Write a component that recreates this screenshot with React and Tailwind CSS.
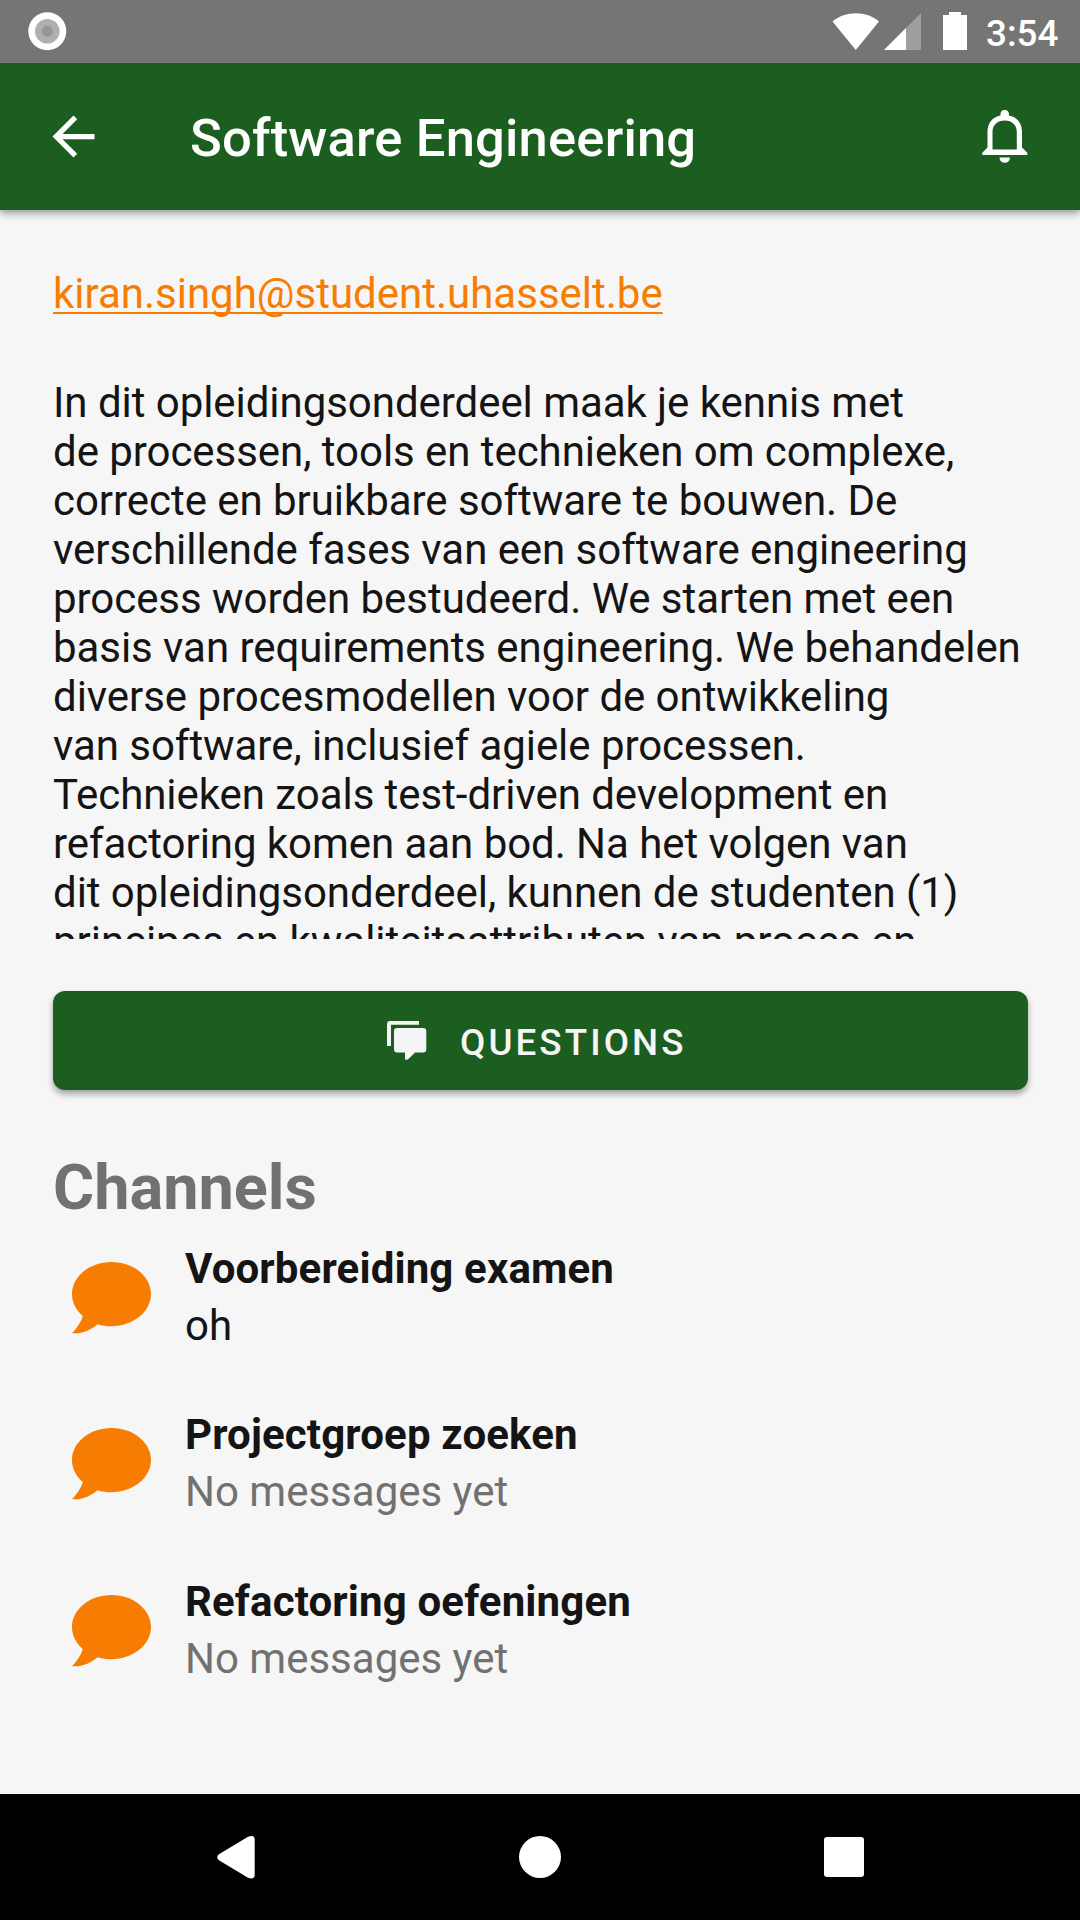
const ROBOTO = "font-['Roboto',sans-serif]";

const CHANNELS = [
  { name: "Voorbereiding examen", message: "oh", color: "text-[#141414]", height: "h-[166px]" },
  { name: "Projectgroep zoeken", message: "No messages yet", color: "text-[#717171]", height: "h-[167px]" },
  { name: "Refactoring oefeningen", message: "No messages yet", color: "text-[#717171]", height: "h-[166px]" },
];

const LINES = [
  "In dit opleidingsonderdeel maak je kennis met",
  "de processen, tools en technieken om complexe,",
  "correcte en bruikbare software te bouwen. De",
  "verschillende fases van een software engineering",
  "process worden bestudeerd. We starten met een",
  "basis van requirements engineering. We behandelen",
  "diverse procesmodellen voor de ontwikkeling",
  "van software, inclusief agiele processen.",
  "Technieken zoals test-driven development en",
  "refactoring komen aan bod. Na het volgen van",
  "dit opleidingsonderdeel, kunnen de studenten (1)",
  "principes en kwaliteitsattributen van proces en",
];

function StatusBar() {
  return (
    <div className="relative z-10 flex h-[63px] items-start bg-[#757575] text-white">
      <svg className="mt-3 ml-7 h-[39px] w-[39px]" viewBox="0 0 39 39">
        <circle cx="19.3" cy="19.3" r="19" fill="#fff" />
        <circle cx="19.3" cy="19.3" r="12.3" fill="#b0b0b0" />
        <circle cx="19.3" cy="19.3" r="5.7" fill="#979797" />
      </svg>
      <svg className="mt-3 ml-auto h-[39px] w-[136px]" viewBox="0 0 136 39">
        <path d="M0.5 9.5C13 -1.5 34.500 -1.500 47 9.500L23.800 38Z" fill="#fff" />
        <path d="M52 38L89 1V38Z" fill="#fff" fillOpacity="0.3" />
        <path d="M52 38L74 16V38Z" fill="#fff" />
        <path d="M111 38V3H117V0H129V3H135V38Z" fill="#fff" />
      </svg>
      <span className="mt-[11px] mr-[21px] ml-[18px] w-[73px] text-[36.75px] leading-[46px] font-medium whitespace-nowrap">3:54</span>
    </div>
  );
}

function AppBar() {
  return (
    <header className="relative flex h-[147px] items-center bg-[#1c5e20] text-white shadow-[0_3px_8px_rgba(0,0,0,0.4)]">
      <svg className="ml-[42px] h-[63px] w-[63px]" viewBox="0 0 24 24" fill="currentColor">
        <path d="M20 11H7.830l5.590-5.590L12 4l-8 8 8 8 1.410-1.410L7.830 13H20v-2z" />
      </svg>
      <h1 className="mt-[3px] ml-[85px] text-[52.5px] leading-[62px] font-medium tracking-[0.19px] whitespace-nowrap">Software Engineering</h1>
      <svg className="mr-[52px] ml-auto h-[54px] w-[46px]" viewBox="0 0 46 54">
        <path d="M5.500 37.500V22C5.500 13 10.500 7.200 18.500 5.500V4A4.200 4.200 0 0 1 26.900 4V5.500C35 7.200 40 13 40 22V37.500L45.300 42.700V45H0.300V42.700Z M10.500 39.500H34.800V22C34.800 15 30 10.500 22.700 10.500S10.500 15 10.500 22Z" fill="#fff" fillRule="evenodd" />
        <path d="M17.500 47.500H28A5.250 5.250 0 0 1 17.500 47.500Z" fill="#fff" />
      </svg>
    </header>
  );
}

function Channel({ name, message, color, height }) {
  return (
    <li className={"flex " + height}>
      <svg className="mt-[18px] ml-[19px] h-[72px] w-[79px]" viewBox="0 0 512 467" preserveAspectRatio="none" fill="#f77d02">
        <path d="M256 0C114.600 0 0 93.100 0 208c0 55 26 105 70 142c-12 42-38 78-70 112c68 5 125-25 166-59c28 9 59 13 90 13c141.400 0 256-93.100 256-208S397.400 0 256 0z" />
      </svg>
      <div className="ml-[34px] text-[42px] whitespace-nowrap">
        <div className="h-[57px] leading-[49px] font-bold tracking-[0.14px] text-[#141414]">{name}</div>
        <div className={"leading-[49px] " + color}>{message}</div>
      </div>
    </li>
  );
}

function NavBar() {
  return (
    <nav className="flex h-[126px] items-center bg-black">
      <svg className="ml-[217px] h-[43px] w-[38px]" viewBox="0 0 38 43" fill="#fff">
        <path d="M1.500 18.500Q-1 21.300 1.500 24L31 41.700Q37.500 44 37.700 39V3.500Q37.500-1.500 31 0.800Z" />
      </svg>
      <div className="ml-[264px] size-[42px] rounded-full bg-white" />
      <div className="ml-[263px] size-10 rounded-[3px] bg-white" />
    </nav>
  );
}

export default function App() {
  return (
    <div className={"flex h-[1920px] w-[1080px] flex-col overflow-hidden bg-[#f6f6f6] " + ROBOTO}>
      <StatusBar />
      <AppBar />
      <main className="flex-1 px-[53px] pt-[59px]">
        <div className="h-[670px] overflow-hidden text-[42px] leading-[49px] whitespace-nowrap text-[#141414]">
          <a className="mb-[60px] block w-fit text-[#f77d02] underline decoration-2 underline-offset-[4px] [text-decoration-skip-ink:none]">
            kiran.singh@student.uhasselt.be
          </a>
          {LINES.map((line) => (
            <p key={line} className="tracking-[-0.05px]">{line}</p>
          ))}
        </div>
        <button className="mt-[52px] flex h-[99px] w-[975px] items-center rounded-xl bg-[#1c5e20] text-[#f5f5f5] shadow-[0_4px_6px_rgba(0,0,0,0.35)]">
          <svg className="mb-[2px] ml-[334px] h-[40px] w-[40px]" viewBox="0 0 40 40" fill="currentColor">
            <path d="M0 26V4Q0 1 3 1H32V4.700H4V26Z" />
            <path d="M10 8H36Q39.300 8 39.300 11V29Q39.300 32.500 36 32.500H28L22 38.500Q18 41.500 18 38V32.500H10Q7 32.500 7 29V11Q7 8 10 8Z" />
          </svg>
          <span className="mt-1 ml-[33px] text-[36.75px] leading-[44px] font-medium tracking-[3.08px]">QUESTIONS</span>
        </button>
        <h2 className="mt-[61px] text-[63px] leading-[74px] font-bold text-[#717171]">Channels</h2>
        <ul className="mt-[19px]">
          {CHANNELS.map((channel) => (
            <Channel key={channel.name} {...channel} />
          ))}
        </ul>
      </main>
      <NavBar />
    </div>
  );
}
